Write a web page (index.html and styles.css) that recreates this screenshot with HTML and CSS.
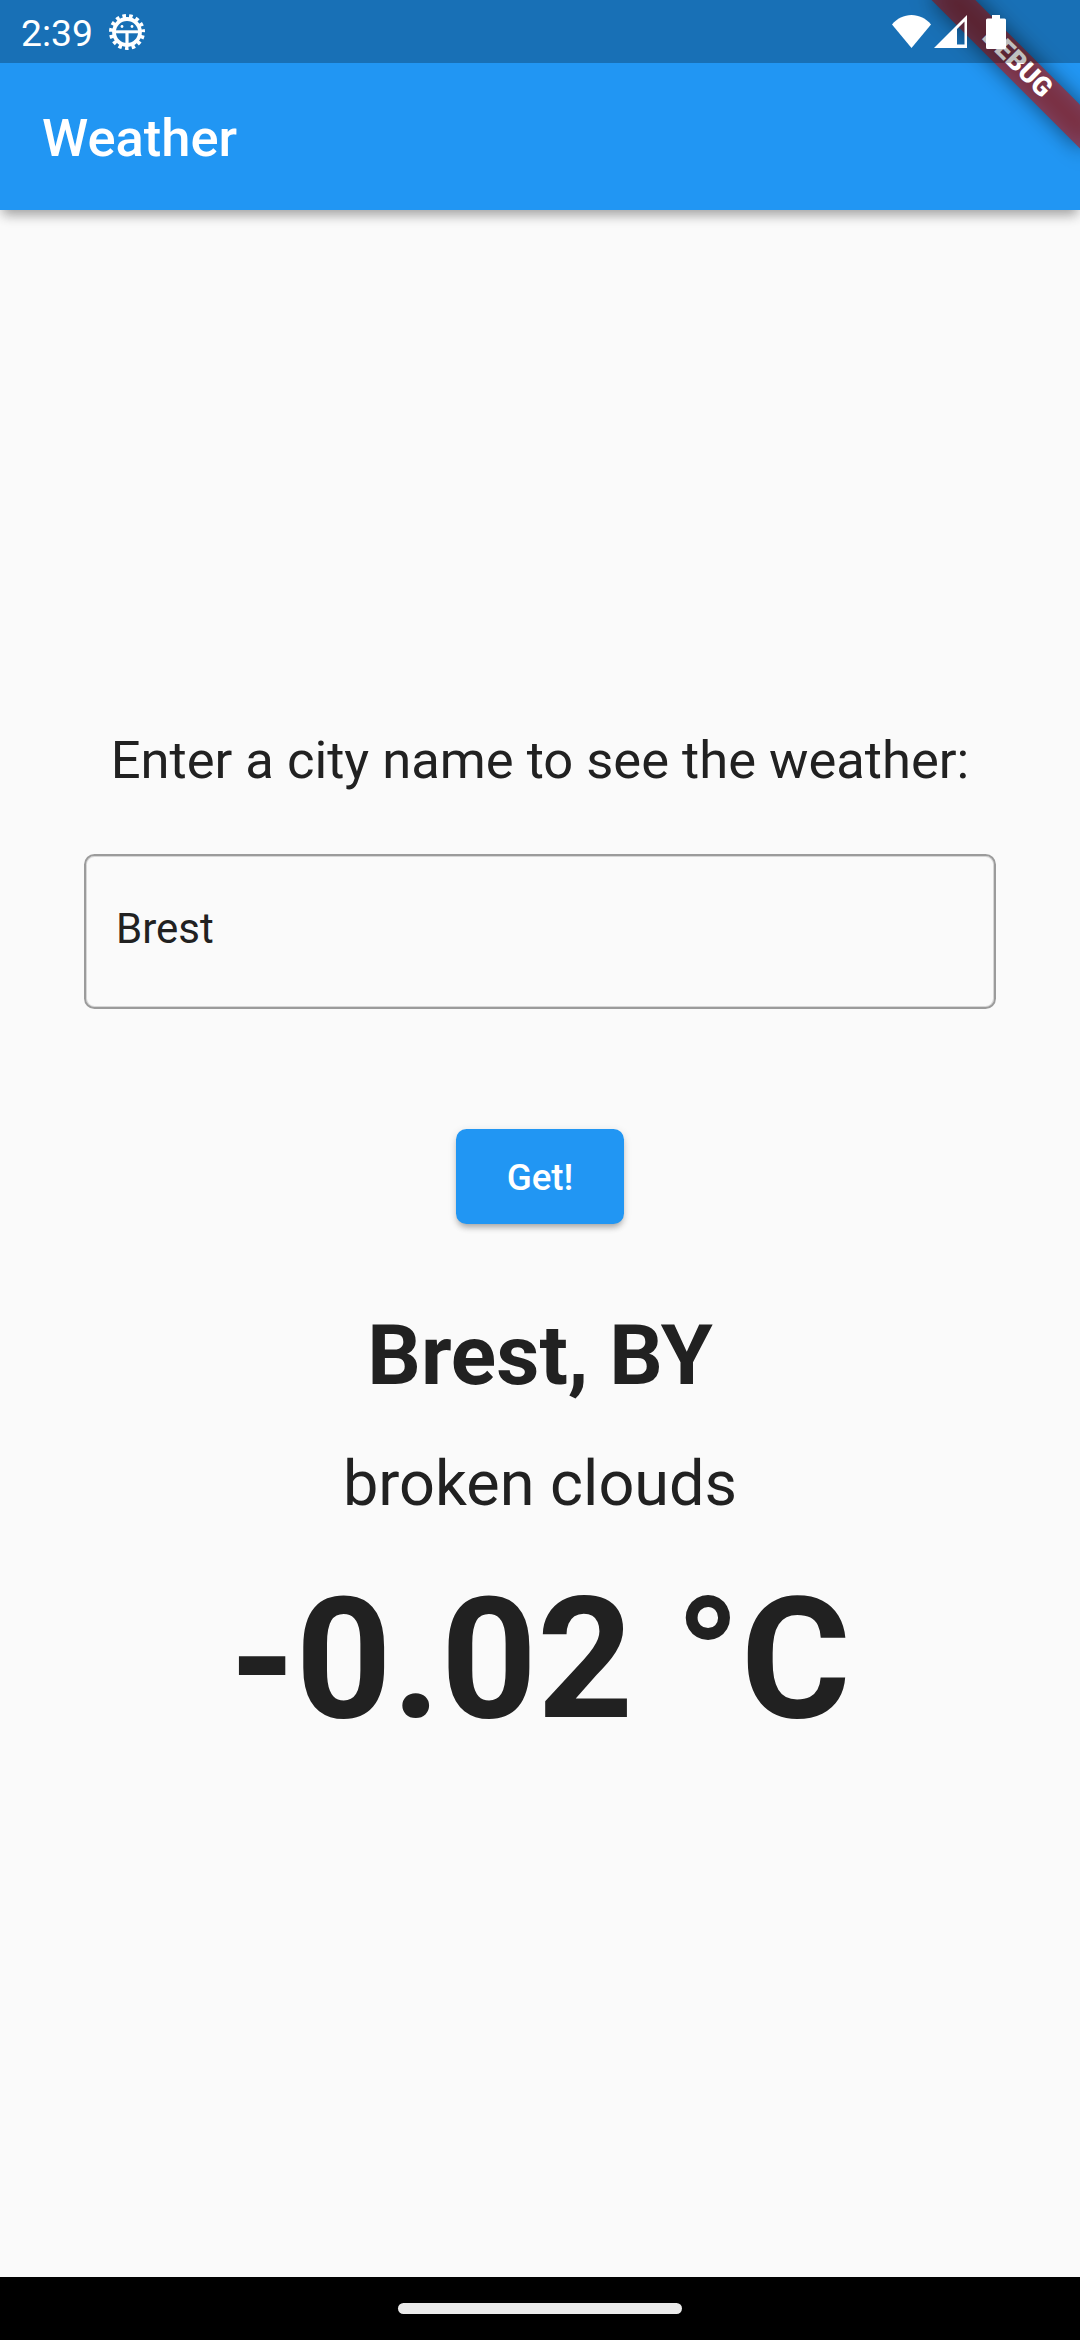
FILE: index.html
```html
<!DOCTYPE html>
<html lang="en">
<head>
<meta charset="utf-8">
<title>Weather</title>
<link rel="stylesheet" href="styles.css">
</head>
<body>
<div class="screen">
  <header class="top">
    <div class="status-bar">
      <span class="clock">2:39</span>
      <svg class="bug" viewBox="-18 -18 36 36">
        <circle r="13" fill="none" stroke="#fff" stroke-width="3.800"/>
        <circle r="15.900" fill="none" stroke="#fff" stroke-width="4.200" stroke-dasharray="3.500 3.160" stroke-dashoffset="-3.300"/>
        <path d="M-12-.2H12" stroke="#fff" stroke-width="3"/>
        <path d="M0 0V12" stroke="#fff" stroke-width="3.200"/>
        <circle cx="-5" cy="-5.500" r="1.400" fill="#fff"/><circle cx="5" cy="-5.500" r="1.400" fill="#fff"/>
      </svg>
      <div class="signals">
        <svg class="wifi" viewBox="0 0 39 33"><path d="M0 9.500C5 3.500 12 0 19.500 0S34 3.500 39 9.500L19.500 33Z" fill="#fff"/></svg>
        <svg class="cell" viewBox="0 0 33 33"><path fill-rule="evenodd" d="M33 0V33H0ZM30.500 6.500L23 14V29.500H30.500Z" fill="#fff"/></svg>
        <svg class="battery" viewBox="0 0 20 34"><path d="M6 0H14V3.500H18.500Q20 3.500 20 5V32.500Q20 34 18.500 34H1.500Q0 34 0 32.500V5Q0 3.500 1.500 3.500H6Z" fill="#fff"/></svg>
      </div>
    </div>
    <div class="app-bar"><h1 class="title">Weather</h1></div>
  </header>
  <main class="content">
    <p class="prompt">Enter a city name to see the weather:</p>
    <div class="field">Brest</div>
    <button class="get" type="button">Get!</button>
    <p class="city">Brest, BY</p>
    <p class="sky">broken clouds</p>
    <p class="temp">-0.02 °C</p>
  </main>
  <footer class="nav"><div class="handle"></div></footer>
  <div class="banner"><div class="banner-shadow"></div><div class="banner-strip">DEBUG</div></div>
</div>
</body>
</html>
```

FILE: styles.css
```css
body { margin: 0; font-family: Roboto, sans-serif; color: #212121; }
p, h1 { margin: 0; font-weight: 400; white-space: nowrap; }
.screen { position: relative; width: 1080px; height: 2340px; overflow: hidden; display: flex; flex-direction: column; background: #fafafa; }

.top { background: #2196f3; box-shadow: 0 8px 11px -3px rgba(0,0,0,.28), 0 4px 14px -1px rgba(0,0,0,.12); }
.status-bar { position: relative; z-index: 2; height: 63px; box-sizing: border-box; padding: 0 74px 0 21px; display: flex; align-items: center; background: rgba(0,0,0,.25); color: #fff; }
.clock { width: 71px; font-size: 37.300px; line-height: 44px; padding-top: 3px; }
.bug { width: 36px; height: 36px; margin-left: 17px; }
.signals { margin-left: auto; display: flex; align-items: flex-end; }
.wifi { width: 39px; height: 33px; margin-bottom: 1px; }
.cell { width: 33px; height: 33px; margin: 0 19px 1px 3px; }
.battery { width: 20px; height: 34px; }
.app-bar { height: 147px; box-sizing: border-box; display: flex; align-items: center; padding: 2px 0 0 42px; }
.title { font-size: 52.500px; font-weight: 500; line-height: 62px; color: #fff; }

.content { flex: 1; display: flex; flex-direction: column; align-items: center; padding-top: 519px; }
.prompt { font-size: 52.500px; line-height: 62px; }
.field { box-sizing: border-box; width: 912px; height: 155px; margin-top: 63px; border: 2px solid #9b9b9b; border-radius: 10.500px; box-shadow: inset 0 0 0 1px rgba(0,0,0,.14); padding: 48px 30px 0; font-size: 42px; line-height: 50px; }
.get { display: block; box-sizing: border-box; width: 168px; height: 95px; margin-top: 120px; padding: 2px 0 0; border: 0; border-radius: 10.500px; background: #2196f3; color: #fff; font: 500 36.750px/43px Roboto, sans-serif; box-shadow: 0 5px 6px -2px rgba(0,0,0,.28), 0 2px 8px 0 rgba(0,0,0,.12); }
.city { margin-top: 83px; font-size: 84px; line-height: 98px; font-weight: 700; }
.sky { margin-top: 42px; font-size: 63px; line-height: 74px; }
.temp { margin-top: 40px; font-size: 168px; line-height: 197px; font-weight: 700; }

.nav { height: 63px; display: flex; align-items: center; justify-content: center; background: #000; }
.handle { width: 284px; height: 11px; border-radius: 6px; background: #ebebeb; }

.banner { position: absolute; z-index: 1; top: 0; right: 0; width: 0; height: 0; transform: rotate(45deg); }
.banner-shadow, .banner-strip { position: absolute; left: -105px; top: 73.500px; width: 210px; height: 31.500px; }
.banner-shadow { background: rgba(0,0,0,.5); filter: blur(10.400px); }
.banner-strip { background: rgba(183,28,28,.627); color: #fff; font-size: 26.800px; font-weight: 900; line-height: 29.500px; text-align: center; }
```
